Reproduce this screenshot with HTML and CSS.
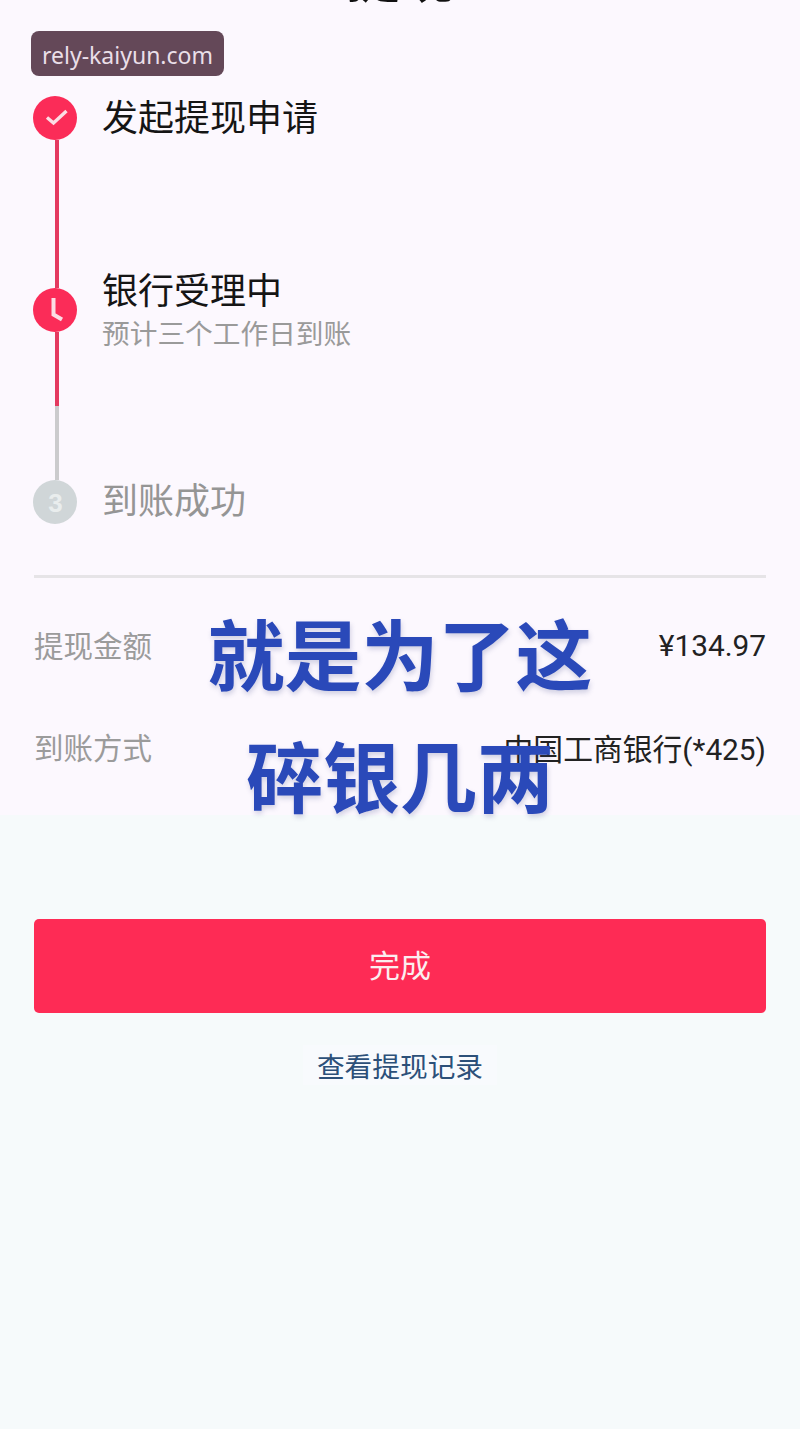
FILE: index.html
```html
<!DOCTYPE html>
<html lang="zh-CN">
<head>
<meta charset="utf-8">
<title>提现</title>
<link rel="stylesheet" href="styles.css">
</head>
<body>
<main class="page">
  <section class="sheet">
    <h1 class="title">提现</h1>
    <div class="steps">
      <div class="rail">
        <span class="dot dot-on">
          <svg viewBox="0 0 44 44" class="glyph"><path d="M14 21.5l6.500 5.500 13-12" fill="none" stroke="#fbdde4" stroke-width="3.4"/></svg>
        </span>
        <span class="line line-long"></span>
        <span class="dot dot-on">
          <svg viewBox="0 0 44 44" class="glyph"><path d="M20.5 10v16.500l8.500 5" fill="none" stroke="#fbdde4" stroke-width="4"/></svg>
        </span>
        <span class="line line-mid"></span>
        <span class="line line-off"></span>
        <span class="dot dot-off">3</span>
      </div>
      <div class="labels">
        <div class="step step-one"><p class="step-name">发起提现申请</p></div>
        <div class="step step-two">
          <p class="step-name">银行受理中</p>
          <p class="step-note">预计三个工作日到账</p>
        </div>
        <div class="step step-three"><p class="step-name step-name-off">到账成功</p></div>
      </div>
    </div>
    <div class="rule"></div>
    <dl class="details">
      <div class="row"><dt>提现金额</dt><dd>¥134.97</dd></div>
      <div class="row"><dt>到账方式</dt><dd>中国工商银行(*425)</dd></div>
    </dl>
  </section>
  <section class="actions">
    <button class="done" type="button">完成</button>
    <a class="history" href="#">查看提现记录</a>
  </section>
  <div class="site-tag">rely-kaiyun.com</div>
  <div class="caption">
    <p class="caption-line">就是为了这</p>
    <p class="caption-line">碎银几两</p>
  </div>
</main>
</body>
</html>
```
FILE: styles.css
```css
* { box-sizing: border-box; }

html, body { margin: 0; padding: 0; }

body {
  width: 800px;
  height: 1429px;
  overflow: hidden;
  font-family: "Noto Sans CJK SC", "Noto Sans", sans-serif;
  background: #f6fafb;
}

p, h1, dl, dd { margin: 0; }

.page { position: relative; height: 1429px; overflow: hidden; }

/* upper sheet: progress and details */
.sheet {
  display: flow-root;
  height: 815px;
  padding: 0 34px;
  background: #fcf8fe;
}

.title {
  height: 96px;
  margin-top: -55px;
  margin-bottom: 55px;
  text-align: center;
  font-size: 54px;
  line-height: 60px;
  font-weight: 700;
  color: #111;
}

.steps { display: flex; gap: 25px; }

.rail {
  display: flex;
  flex-direction: column;
  align-items: center;
  width: 44px;
  margin-left: -1px;
}

.dot {
  display: flex;
  align-items: center;
  justify-content: center;
  flex: none;
  width: 44px;
  height: 44px;
  border-radius: 50%;
}

.dot-on { background: #fb2c58; }

.dot-off {
  padding-left: 1px;
  padding-top: 2px;
  background: #d0d6d8;
  color: #e9eded;
  font: 700 26px "Liberation Sans", sans-serif;
}

.glyph { width: 44px; height: 44px; display: block; }

.line { flex: none; width: 4px; margin-left: 3px; }
.line-long { height: 148px; background: #e43a60; }
.line-mid { height: 74px; background: #e43a60; }
.line-off { height: 74px; background: #cbcbcd; }

.labels {
  flex: 1;
  display: flex;
  flex-direction: column;
  margin-top: -3px;
}

.step { display: flex; flex-direction: column; }
.step-one { height: 173px; }
.step-two { height: 210px; }

.step-name {
  font-size: 36px;
  line-height: 44px;
  color: #151515;
}

.step-note {
  font-size: 27.7px;
  line-height: 44px;
  color: #9a9a9a;
}

.step-name-off { color: #959595; }

.rule {
  height: 3px;
  margin-top: 51px;
  background: #e6e4e7;
}

.details { padding-top: 15px; }

.row {
  display: flex;
  justify-content: space-between;
  align-items: center;
  height: 102px;
  font-size: 29.5px;
}

.row dt { color: #9b9b9b; }

.row dd {
  padding-top: 2px;
  color: #222;
  font-family: Roboto, "Noto Sans CJK SC", sans-serif;
  font-size: 29.8px;
}

/* lower area: primary action and link */
.actions {
  display: flex;
  flex-direction: column;
  align-items: center;
  padding: 104px 34px 0;
}

.done {
  width: 100%;
  height: 94px;
  padding-bottom: 6px;
  border: 0;
  border-radius: 5px;
  background: #fe2b55;
  color: #fbeef0;
  font-family: inherit;
  font-size: 31px;
}

.history {
  margin-top: 32px;
  padding: 0 14px;
  font-size: 27.7px;
  line-height: 40px;
  color: #2c5079;
  text-decoration: none;
  background: #f8fafd;
}

/* overlays */
.site-tag {
  position: absolute;
  left: 31px;
  top: 31px;
  width: 193px;
  height: 45px;
  border-radius: 8px;
  background: #644858;
  color: #eadfe8;
  font: 23px/49px "Noto Sans", sans-serif;
  text-align: center;
}

.caption {
  position: absolute;
  left: 0;
  right: 0;
  top: 591px;
  text-align: center;
  font-weight: 600;
  color: #2a49b9;
  text-shadow: 1px 3px 5px rgba(60, 70, 130, .22);
}

.caption-line {
  font-size: 77px;
  line-height: 122px;
}
```
